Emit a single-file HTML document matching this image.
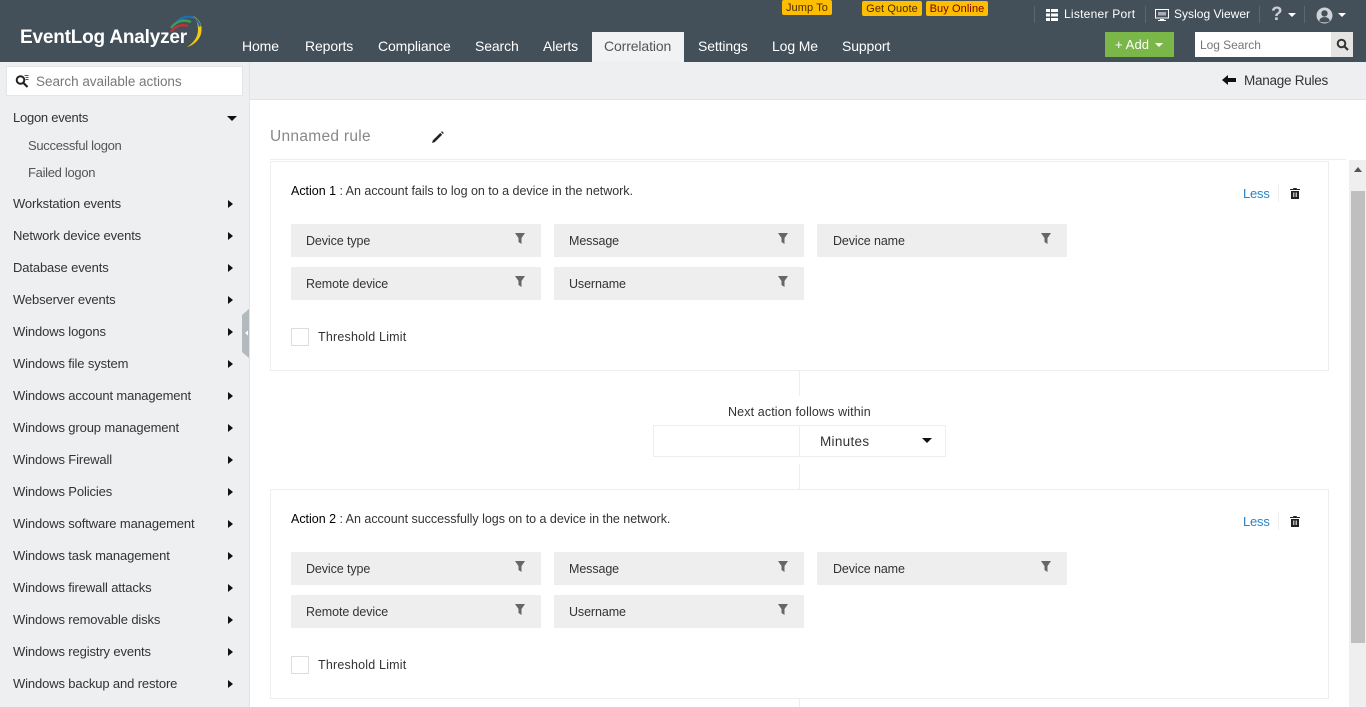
<!DOCTYPE html>
<html><head><meta charset="utf-8"><style>
html,body{margin:0;padding:0}
body{width:1366px;height:707px;overflow:hidden;position:relative;background:#fff;font-family:"Liberation Sans",sans-serif;font-size:13px;color:#333}
div,span,a,svg{position:absolute;white-space:nowrap}
.hd{left:0;top:0;width:1366px;height:62px;background:#434f59}
.n{top:38px;font-size:14px;line-height:17px;color:#fff;letter-spacing:-.12px}
.tab{left:592px;top:32px;width:92px;height:30px;background:#f1f2f3}
.y{background:#fdbd00;border-radius:2px;color:#4a2a00;font-size:11px;line-height:17px;text-align:center;height:15px;letter-spacing:.1px}
.t{color:#fff;font-size:12px;line-height:15px;letter-spacing:.25px;top:7px}
.sep{top:6px;width:1px;height:17px;background:#5a6670}
.sb{left:0;top:62px;width:249px;height:645px;background:#eeeff1;border-right:1px solid #e2e3e5}
.i{left:13px;font-size:13px;line-height:16px;color:#333;letter-spacing:-.13px}
.s{left:28px;color:#555;letter-spacing:-.3px}
.r{left:228px;width:0;height:0;border-left:5px solid #111;border-top:4px solid transparent;border-bottom:4px solid transparent}
.card{left:270px;width:1057px;height:208px;border:1px solid #eee;background:#fff}
.f{width:250px;height:33px;background:#eee}
.f span{left:15px;top:9px;line-height:16px;color:#333;letter-spacing:-.1px;font-size:12.5px}
.f svg{left:224px;top:9px}
.tx{color:#333;line-height:16px;letter-spacing:.2px;font-size:12.5px}
.a{letter-spacing:-.02px}
.c{width:16px;height:16px;border:1px solid #ddd;background:#fff}
.less{color:#2a83c6;font-size:13px;line-height:16px;letter-spacing:-.2px}
</style></head><body>
<div class="hd"></div>
<div style="left:20px;top:27px;font-size:19px;line-height:22px;color:#fff;font-weight:bold;letter-spacing:-.2px">EventLog Analyzer</div>
<svg style="left:165px;top:14px" width="40" height="36" viewBox="0 0 40 36" fill="none">
<path d="M10 10C14 4 22 1 29 4" stroke="#1c6fb5" stroke-width="2.4"/>
<path d="M6 14C11 7 19 5 26 8" stroke="#3f9c4a" stroke-width="2.4"/>
<path d="M6 18C10 12 17 10 23 12" stroke="#c62f3d" stroke-width="2.4"/>
<path d="M28 2C35 5 38 12 36 20C34 27 27 32 22 33C28 29 33 24 33 15C33 9 31 5 28 2Z" fill="#f3c71c"/>
<path d="M29 3C33 5 35 8 36 12L34 13C33 9 31 6 29 3Z" fill="#1c6fb5"/>
</svg>
<div class="tab"></div>
<span class="n" style="left:242px">Home</span>
<span class="n" style="left:305px">Reports</span>
<span class="n" style="left:378px">Compliance</span>
<span class="n" style="left:475px">Search</span>
<span class="n" style="left:543px">Alerts</span>
<span class="n" style="left:604px;color:#555">Correlation</span>
<span class="n" style="left:698px">Settings</span>
<span class="n" style="left:772px">Log Me</span>
<span class="n" style="left:842px">Support</span>
<div class="y" style="left:782px;top:0;width:50px">Jump To</div>
<div class="y" style="left:862px;top:1px;width:60px">Get Quote</div>
<div class="y" style="left:926px;top:1px;width:62px;color:#7a0000">Buy Online</div>
<div class="sep" style="left:1034px"></div>
<svg style="left:1046px;top:9px" width="12" height="12" viewBox="0 0 12 12"><rect width="12" height="3" y="0" fill="#fff"/><rect width="12" height="3" y="4.500" fill="#fff"/><rect width="12" height="3" y="9" fill="#fff"/><rect x="4" width="1" height="12" fill="#434f59"/></svg>
<span class="t" style="left:1064px">Listener Port</span>
<div class="sep" style="left:1145px"></div>
<svg style="left:1155px;top:9px" width="14" height="13" viewBox="0 0 14 13" fill="none"><rect x=".5" y=".5" width="13" height="8.500" stroke="#fff"/><rect x="5" y="10" width="4" height="1" fill="#fff"/><rect x="3" y="11" width="8" height="1" fill="#fff"/><rect x="3" y="3" width="8" height="3.500" fill="#aab"/></svg>
<span class="t" style="left:1174px;letter-spacing:.02px">Syslog Viewer</span>
<div class="sep" style="left:1259px"></div>
<span style="left:1271px;top:5px;font-size:19px;line-height:20px;color:#ccd;font-weight:bold">?</span>
<div style="left:1288px;top:13px;width:0;height:0;border-top:4px solid #fff;border-left:4px solid transparent;border-right:4px solid transparent"></div>
<div class="sep" style="left:1304px"></div>
<svg style="left:1316px;top:7px" width="17" height="17" viewBox="0 0 16 16"><circle cx="8" cy="8" r="7.500" fill="#cfd3d7"/><circle cx="8" cy="6" r="3" fill="#434f59"/><path d="M3 13C4 10 6 9.500 8 9.500S12 10 13 13C11 15 5 15 3 13Z" fill="#434f59"/></svg>
<div style="left:1338px;top:13px;width:0;height:0;border-top:4px solid #fff;border-left:4px solid transparent;border-right:4px solid transparent"></div>
<div style="left:1105px;top:32px;width:69px;height:25px;background:#7ab648"></div>
<span style="left:1115px;top:37px;color:#fff;font-size:13px;line-height:16px;letter-spacing:.1px">+ Add</span>
<div style="left:1155px;top:43px;width:0;height:0;border-top:4px solid #fff;border-left:4px solid transparent;border-right:4px solid transparent"></div>
<div style="left:1195px;top:32px;width:136px;height:25px;background:#fff"></div>
<span style="left:1200px;top:38px;color:#777;font-size:12px;line-height:15px;letter-spacing:-.05px">Log Search</span>
<div style="left:1331px;top:32px;width:22px;height:25px;background:#e4e4e2"></div>
<svg style="left:1336px;top:38px" width="13" height="13" viewBox="0 0 13 13" fill="none"><circle cx="5.500" cy="5.500" r="3.800" stroke="#333" stroke-width="2"/><path d="M8.500 8.500L12 12" stroke="#333" stroke-width="2.200"/></svg>

<div style="left:250px;top:62px;width:1116px;height:37px;background:#eeeff1;border-bottom:1px solid #e2e3e5"></div>
<svg style="left:1222px;top:75px" width="14" height="10" viewBox="0 0 14 10"><path d="M0 5L6 0V3H14V7H6V10Z" fill="#111"/></svg>
<span style="left:1244px;top:72px;font-size:13.500px;line-height:17px;color:#333;letter-spacing:-.25px">Manage Rules</span>

<div class="sb"></div>
<div style="left:6px;top:66px;width:235px;height:28px;background:#fff;border:1px solid #e4e5e7"></div>
<svg style="left:15px;top:74px" width="14" height="14" viewBox="0 0 14 14" fill="none"><circle cx="5.500" cy="6" r="3.800" stroke="#222" stroke-width="2"/><path d="M8.500 9L12.500 13" stroke="#222" stroke-width="2.200"/><path d="M9.500 1.500H13.500M10.500 3.500H13.500M10.500 5.500H13.500" stroke="#555"/></svg>
<span style="left:36px;top:73px;font-size:13.500px;line-height:17px;color:#777;letter-spacing:-.03px">Search available actions</span>
<span class="i" style="top:110px;letter-spacing:-.25px">Logon events</span>
<div style="left:227px;top:116px;width:0;height:0;border-top:5px solid #111;border-left:5px solid transparent;border-right:5px solid transparent"></div>
<span class="i s" style="top:138px">Successful logon</span>
<span class="i s" style="top:165px">Failed logon</span>
<span class="i" style="top:196px">Workstation events</span><div class="r" style="top:200px"></div>
<span class="i" style="top:228px">Network device events</span><div class="r" style="top:232px"></div>
<span class="i" style="top:260px">Database events</span><div class="r" style="top:264px"></div>
<span class="i" style="top:292px">Webserver events</span><div class="r" style="top:296px"></div>
<span class="i" style="top:324px">Windows logons</span><div class="r" style="top:328px"></div>
<span class="i" style="top:356px">Windows file system</span><div class="r" style="top:360px"></div>
<span class="i" style="top:388px">Windows account management</span><div class="r" style="top:392px"></div>
<span class="i" style="top:420px">Windows group management</span><div class="r" style="top:424px"></div>
<span class="i" style="top:452px">Windows Firewall</span><div class="r" style="top:456px"></div>
<span class="i" style="top:484px">Windows Policies</span><div class="r" style="top:488px"></div>
<span class="i" style="top:516px">Windows software management</span><div class="r" style="top:520px"></div>
<span class="i" style="top:548px">Windows task management</span><div class="r" style="top:552px"></div>
<span class="i" style="top:580px">Windows firewall attacks</span><div class="r" style="top:584px"></div>
<span class="i" style="top:612px">Windows removable disks</span><div class="r" style="top:616px"></div>
<span class="i" style="top:644px">Windows registry events</span><div class="r" style="top:648px"></div>
<span class="i" style="top:676px">Windows backup and restore</span><div class="r" style="top:680px"></div>
<svg style="left:242px;top:309px" width="8" height="49" viewBox="0 0 8 49"><path d="M0 6L7 0V49L0 43Z" fill="#b3babd"/><path d="M3 24L6 21.500V26.500Z" fill="#fff"/></svg>

<span style="left:270px;top:127px;font-size:15.500px;line-height:19px;color:#888;letter-spacing:.3px">Unnamed rule</span>
<svg style="left:432px;top:131px" width="12" height="12" viewBox="0 0 13 13"><path d="M0 13L1 10L9 2L11 4L3 12Z" fill="#222"/><path d="M9.800 1.200L10.800 .2L12.800 2.200L11.800 3.200Z" fill="#222"/></svg>
<div style="left:270px;top:159px;width:1076px;height:1px;background:#eee"></div>
<div style="left:1349px;top:160px;width:17px;height:547px;background:#efefef"></div>
<div style="left:1351px;top:191px;width:14px;height:452px;background:#bfbfbf"></div>
<div style="left:1354px;top:167px;width:0;height:0;border-bottom:5px solid #555;border-left:4px solid transparent;border-right:4px solid transparent"></div>

<!-- card 1 -->
<div class="card" style="top:161px"></div>
<span class="tx a" style="left:291px;top:183px"><b style="font-weight:normal;color:#000">Action 1</b> : An account fails to log on to a device in the network.</span>
<span class="less" style="left:1243px;top:186px">Less</span>
<div style="left:1278px;top:184px;width:1px;height:18px;background:#eee"></div>
<svg style="left:1290px;top:187px" width="10" height="12" viewBox="0 0 10 12"><path d="M0 2H3L3.500 1H6.500L7 2H10V3H0ZM1 4H9V12H1Z" fill="#222"/><rect x="3.300" y="5.500" width="1" height="4.500" fill="#fff"/><rect x="5.700" y="5.500" width="1" height="4.500" fill="#fff"/></svg>
<div class="f" style="left:291px;top:224px"><span>Device type</span><svg width="10" height="11" viewBox="0 0 10 11"><path d="M0 0H10L6.500 5V11L3.500 9V5Z" fill="#666"/></svg></div>
<div class="f" style="left:554px;top:224px"><span>Message</span><svg width="10" height="11" viewBox="0 0 10 11"><path d="M0 0H10L6.500 5V11L3.500 9V5Z" fill="#666"/></svg></div>
<div class="f" style="left:817px;top:224px"><span style="left:16px">Device name</span><svg width="10" height="11" viewBox="0 0 10 11"><path d="M0 0H10L6.500 5V11L3.500 9V5Z" fill="#666"/></svg></div>
<div class="f" style="left:291px;top:267px"><span>Remote device</span><svg width="10" height="11" viewBox="0 0 10 11"><path d="M0 0H10L6.500 5V11L3.500 9V5Z" fill="#666"/></svg></div>
<div class="f" style="left:554px;top:267px"><span>Username</span><svg width="10" height="11" viewBox="0 0 10 11"><path d="M0 0H10L6.500 5V11L3.500 9V5Z" fill="#666"/></svg></div>
<div class="c" style="left:291px;top:328px"></div>
<span class="tx" style="left:318px;top:329px">Threshold Limit</span>

<!-- connector -->
<div style="left:799px;top:371px;width:1px;height:25px;background:#eee"></div>
<span class="tx" style="left:728px;top:404px;letter-spacing:.12px">Next action follows within</span>
<div style="left:653px;top:425px;width:291px;height:30px;border:1px solid #eee"></div>
<div style="left:799px;top:426px;width:1px;height:30px;background:#eee"></div>
<span style="left:820px;top:433px;font-size:13.500px;line-height:17px;color:#333;letter-spacing:.3px">Minutes</span>
<div style="left:922px;top:438px;width:0;height:0;border-top:5px solid #111;border-left:5px solid transparent;border-right:5px solid transparent"></div>
<div style="left:799px;top:464px;width:1px;height:25px;background:#eee"></div>

<!-- card 2 -->
<div class="card" style="top:489px"></div>
<span class="tx a" style="left:291px;top:511px"><b style="font-weight:normal;color:#000">Action 2</b> : An account successfully logs on to a device in the network.</span>
<span class="less" style="left:1243px;top:514px">Less</span>
<div style="left:1278px;top:512px;width:1px;height:18px;background:#eee"></div>
<svg style="left:1290px;top:515px" width="10" height="12" viewBox="0 0 10 12"><path d="M0 2H3L3.500 1H6.500L7 2H10V3H0ZM1 4H9V12H1Z" fill="#222"/><rect x="3.300" y="5.500" width="1" height="4.500" fill="#fff"/><rect x="5.700" y="5.500" width="1" height="4.500" fill="#fff"/></svg>
<div class="f" style="left:291px;top:552px"><span>Device type</span><svg width="10" height="11" viewBox="0 0 10 11"><path d="M0 0H10L6.500 5V11L3.500 9V5Z" fill="#666"/></svg></div>
<div class="f" style="left:554px;top:552px"><span>Message</span><svg width="10" height="11" viewBox="0 0 10 11"><path d="M0 0H10L6.500 5V11L3.500 9V5Z" fill="#666"/></svg></div>
<div class="f" style="left:817px;top:552px"><span style="left:16px">Device name</span><svg width="10" height="11" viewBox="0 0 10 11"><path d="M0 0H10L6.500 5V11L3.500 9V5Z" fill="#666"/></svg></div>
<div class="f" style="left:291px;top:595px"><span>Remote device</span><svg width="10" height="11" viewBox="0 0 10 11"><path d="M0 0H10L6.500 5V11L3.500 9V5Z" fill="#666"/></svg></div>
<div class="f" style="left:554px;top:595px"><span>Username</span><svg width="10" height="11" viewBox="0 0 10 11"><path d="M0 0H10L6.500 5V11L3.500 9V5Z" fill="#666"/></svg></div>
<div class="c" style="left:291px;top:656px"></div>
<span class="tx" style="left:318px;top:657px">Threshold Limit</span>
<div style="left:799px;top:699px;width:1px;height:8px;background:#eee"></div>
</body></html>
